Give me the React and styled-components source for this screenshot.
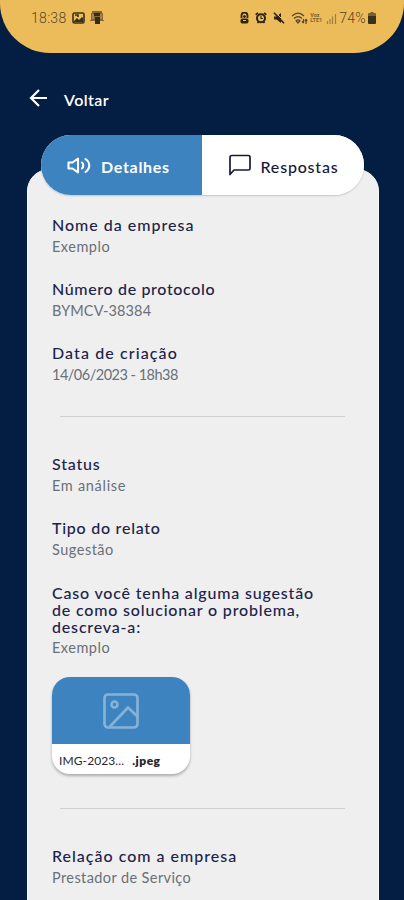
import styled, { createGlobalStyle } from "styled-components";

const GlobalStyle = createGlobalStyle`
  * {
    box-sizing: border-box;
  }
  body {
    margin: 0;
    background-color: #031e42;
    font-family: Lato, "Open Sans", sans-serif;
  }
`;

const Container = styled.div`
  height: 900px;
  overflow: hidden;
  background-color: #031e42;
`;

const StatusBar = styled.header`
  height: 53px;
  padding: 8px 28px 0 31px;
  display: flex;
  align-items: flex-start;
  justify-content: space-between;
  background-color: #edbc5a;
  border-radius: 0 0 50px 50px;
  color: #54452b;
`;

const StatusGroup = styled.div`
  height: 20px;
  display: flex;
  align-items: center;
  gap: ${(props) => props.$gap}px;
`;

const StatusText = styled.span`
  font-family: Roboto, sans-serif;
  font-size: 14px;
  font-weight: 300;
  line-height: 20px;
  letter-spacing: ${(props) => props.$spacing || 0}px;
`;

const NetworkLabel = styled.span`
  width: 14px;
  font-family: Roboto, sans-serif;
  font-size: 5.5px;
  font-weight: 700;
  line-height: 5px;
  opacity: 0.75;
`;

const BackButton = styled.button`
  margin: 33px 0 0 28px;
  padding: 0;
  height: 24px;
  display: flex;
  align-items: center;
  gap: 15px;
  border: none;
  background: none;
  color: white;
  font-family: inherit;
  font-size: 16px;
  font-weight: 600;
  line-height: 24px;
`;

const BackText = styled.span`
  padding-top: 3px;
  letter-spacing: 0.4px;
`;

const Tabs = styled.nav`
  position: relative;
  z-index: 1;
  width: 323px;
  height: 60px;
  margin: 25px 0 0 41px;
  display: flex;
  overflow: hidden;
  border-radius: 30px;
  background-color: white;
  box-shadow: 0 1px 2px rgba(0, 0, 0, 0.18);
`;

const Tab = styled.button`
  width: ${(props) => (props.$active ? 160.5 : 162.5)}px;
  padding: 0 0 0 ${(props) => (props.$active ? 25 : 26)}px;
  display: flex;
  align-items: center;
  gap: ${(props) => (props.$active ? 8 : 9)}px;
  border: none;
  background-color: ${(props) => (props.$active ? "#3c83bf" : "white")};
  color: ${(props) => (props.$active ? "white" : "#17183b")};
  font-family: inherit;
  font-size: 16px;
  font-weight: ${(props) => (props.$active ? 700 : 500)};
`;

const TabText = styled.span`
  padding-top: 2px;
  letter-spacing: ${(props) => props.$spacing}px;
`;

const Panel = styled.main`
  width: 352px;
  height: 740px;
  margin: -26px 0 0 27px;
  padding: 46px 34px 0 24px;
  border: 1px solid #f8f9fb;
  border-radius: 22px 22px 0 0;
  background-color: #efefef;
`;

const Section = styled.section`
  display: flex;
  flex-direction: column;
  gap: 23px;
`;

const Field = styled.div`
  display: flex;
  flex-direction: column;
  gap: 3px;
`;

const Label = styled.span`
  color: #20224a;
  font-size: 16px;
  font-weight: 500;
  line-height: 17px;
  letter-spacing: ${(props) => props.$spacing}px;
  white-space: pre-line;
`;

const LongLabel = styled(Label)`
  margin-top: 1px;
  margin-bottom: -1px;
`;

const Value = styled.span`
  color: #697078;
  font-size: 14.5px;
  line-height: 21px;
  letter-spacing: ${(props) => props.$spacing}px;
`;

const Divider = styled.hr`
  height: 1px;
  margin: ${(props) => props.$top}px 0 38px 8px;
  width: 285px;
  border: none;
  background-color: #cfd0d1;
`;

const FileCard = styled.div`
  width: 138px;
  height: 97px;
  margin-top: 19px;
  overflow: hidden;
  border-radius: 18px;
  background-color: white;
  box-shadow: 0 2px 3px rgba(0, 0, 0, 0.28);
`;

const FilePreview = styled.div`
  height: 67px;
  display: flex;
  align-items: center;
  justify-content: center;
  background-color: #3c83bf;
  color: #86b2d8;
`;

const FileName = styled.div`
  height: 30px;
  padding: 3px 0 0 7px;
  display: flex;
  align-items: center;
  gap: 8px;
  color: #26272c;
  font-size: 12px;
`;

const FileText = styled.span`
  letter-spacing: 0.1px;
`;

const FileExtension = styled.b`
  font-weight: 800;
  letter-spacing: 0.5px;
`;

const PictureIcon = () => (
  <svg width="13" height="12" viewBox="0 0 13 12" fill="none" stroke="#3b301b" strokeWidth="1.6">
    <rect x="1" y="1" width="11" height="10" rx="1.5" />
    <path d="M2 9l3-3 2 2 3-3 1 1v4H2z" fill="#3b301b" stroke="none" />
    <path d="M3 3h3v2" />
  </svg>
);

const ServerIcon = () => (
  <svg width="14" height="14" viewBox="0 0 14 14" fill="currentColor">
    <path d="M2 0h10v2h1v7h1v1h-4v3H5v-3H0V9h1V2h1z" opacity="0.7" />
    <path d="M4 2h6v3H4zM5 6h5v7H5z" fill="#382b12" />
    <path d="M3 3v5M11 3v5" stroke="#edbc5a" strokeWidth="0.7" />
  </svg>
);

const LockIcon = () => (
  <svg width="9" height="12" viewBox="0 0 9 12" fill="none" stroke="#2d2414">
    <path d="M1.5 6V3.5a3 3 0 016 0V6" strokeWidth="1.8" />
    <rect x="1" y="7" width="7" height="4" rx="1" fill="#2d2414" />
    <circle cx="4.5" cy="4.5" r="1" fill="#2d2414" />
    <path d="M3 8.5h3" stroke="#edbc5a" strokeWidth="1" />
  </svg>
);

const AlarmIcon = () => (
  <svg width="12" height="12" viewBox="0 0 12 12" fill="none" stroke="#2d2414">
    <circle cx="6" cy="6.3" r="4" strokeWidth="2" />
    <path d="M.7 2.7L3 .9M11.3 2.7L9 .9M2.5 11l1-1.2M9.5 11l-1-1.2" strokeWidth="1.8" />
    <path d="M6 4v2.5h1.8" strokeWidth="1.1" />
  </svg>
);

const MuteIcon = () => (
  <svg width="12" height="12" viewBox="0 0 12 12" fill="#2d2414" stroke="#2d2414">
    <path d="M1 4.5h2.5L8 1v10L3.5 7.5H1z" stroke="none" />
    <path d="M2 0l10 10" stroke="#edbc5a" strokeWidth="1" />
    <path d="M1 .8l10 10.4" strokeWidth="1.6" />
  </svg>
);

const WifiIcon = () => (
  <svg width="17" height="13" viewBox="0 0 17 13" fill="none" stroke="currentColor" strokeWidth="1.2">
    <path d="M1 4c4-3.5 8.5-3.5 12 0M3 6.5c3-2.5 5.5-2.5 8 0M5 8.7c1.5-1.2 2.8-1.2 4 0L7 11z" />
    <path d="M12.5 7v4M11 9.5l1.5 1.7M15 12V8M13.8 9L15 7.5 16.3 9" />
  </svg>
);

const SignalIcon = () => (
  <svg width="11" height="11" viewBox="0 0 11 11" stroke="currentColor" strokeWidth="1.2" opacity="0.5">
    <path d="M1.5 11V8M4 11V6M6.5 11V3.5M9.5 11V1" />
  </svg>
);

const BatteryIcon = () => (
  <svg width="8" height="12" viewBox="0 0 8 12" fill="#3b301b">
    <path d="M2.5 0h3v1H7q1 0 1 1v8.5q0 1.5-1.5 1.5h-5Q0 12 0 10.5V2q0-1 1-1h1.5z" opacity="0.65" />
    <path d="M0 4h8v6.5q0 1.5-1.5 1.5h-5Q0 12 0 10.5z" />
  </svg>
);

const BackIcon = () => (
  <svg width="21" height="20" viewBox="0 0 21 20" fill="none" stroke="currentColor" strokeWidth="2.2">
    <path d="M19 10H3M11 2L3 10l8 8" />
  </svg>
);

const SpeakerIcon = () => (
  <svg width="27" height="24" viewBox="0 0 27 24" fill="none" stroke="currentColor" strokeWidth="2.1" strokeLinejoin="round">
    <path d="M2.5 9.5h4L12 5.5v14l-5.5-4h-4z" />
    <path d="M16 9.5c1.7 1.7 1.7 4.3 0 6M19.5 6c5 3.5 5 9.500 0 13" strokeLinecap="round" />
  </svg>
);

const MessageIcon = () => (
  <svg width="24" height="24" viewBox="0 0 24 24" fill="none" stroke="currentColor" strokeWidth="1.7" strokeLinejoin="round">
    <path d="M4 2.5h16.5q1.5 0 1.5 1.5v11.5q0 1.5-1.5 1.5H6l-4 4.5v-17q0-2 2-2z" />
  </svg>
);

const ImageIcon = () => (
  <svg width="36" height="36" viewBox="0 0 36 36" fill="none" stroke="currentColor" strokeWidth="2.7" strokeLinejoin="round">
    <rect x="1.5" y="1.5" width="33" height="33" rx="3.5" />
    <circle cx="11.5" cy="11.5" r="3" />
    <path d="M6.5 34L25 14.5l9.5 9" />
  </svg>
);

const App = () => {
  return (
    <>
      <GlobalStyle />
      <Container>
        <StatusBar>
          <StatusGroup $gap={5}>
            <StatusText $spacing={0.3}>18:38</StatusText>
            <PictureIcon />
            <ServerIcon />
          </StatusGroup>
          <StatusGroup $gap={2}>
            <StatusGroup $gap={6}>
              <LockIcon />
              <AlarmIcon />
              <MuteIcon />
              <WifiIcon />
            </StatusGroup>
            <NetworkLabel>Voz LTE1</NetworkLabel>
            <SignalIcon />
            <StatusText $spacing={0.3}>74%</StatusText>
            <BatteryIcon />
          </StatusGroup>
        </StatusBar>
        <BackButton>
          <BackIcon />
          <BackText>Voltar</BackText>
        </BackButton>
        <Tabs>
          <Tab $active>
            <SpeakerIcon />
            <TabText $spacing={0.7}>Detalhes</TabText>
          </Tab>
          <Tab>
            <MessageIcon />
            <TabText $spacing={0.8}>Respostas</TabText>
          </Tab>
        </Tabs>
        <Panel>
          <Section>
            <Field>
              <Label $spacing={1}>Nome da empresa</Label>
              <Value $spacing={0.5}>Exemplo</Value>
            </Field>
            <Field>
              <Label $spacing={0.65}>Número de protocolo</Label>
              <Value $spacing={0.1}>BYMCV-38384</Value>
            </Field>
            <Field>
              <Label $spacing={1.1}>Data de criação</Label>
              <Value $spacing={-0.5}>14/06/2023 - 18h38</Value>
            </Field>
          </Section>
          <Divider $top={31} />
          <Section>
            <Field>
              <Label $spacing={0.8}>Status</Label>
              <Value $spacing={0.7}>Em análise</Value>
            </Field>
            <Field>
              <Label $spacing={0.75}>Tipo do relato</Label>
              <Value $spacing={0.5}>Sugestão</Value>
            </Field>
            <Field>
              <LongLabel $spacing={0.82}>
                {"Caso você tenha alguma sugestão\nde como solucionar o problema,\ndescreva-a:"}
              </LongLabel>
              <Value $spacing={0.5}>Exemplo</Value>
            </Field>
          </Section>
          <FileCard>
            <FilePreview>
              <ImageIcon />
            </FilePreview>
            <FileName>
              <FileText>IMG-2023...</FileText>
              <FileExtension>.jpeg</FileExtension>
            </FileName>
          </FileCard>
          <Divider $top={34} />
          <Section>
            <Field>
              <Label $spacing={1}>Relação com a empresa</Label>
              <Value $spacing={0.4}>Prestador de Serviço</Value>
            </Field>
          </Section>
        </Panel>
      </Container>
    </>
  );
};

export default App;
